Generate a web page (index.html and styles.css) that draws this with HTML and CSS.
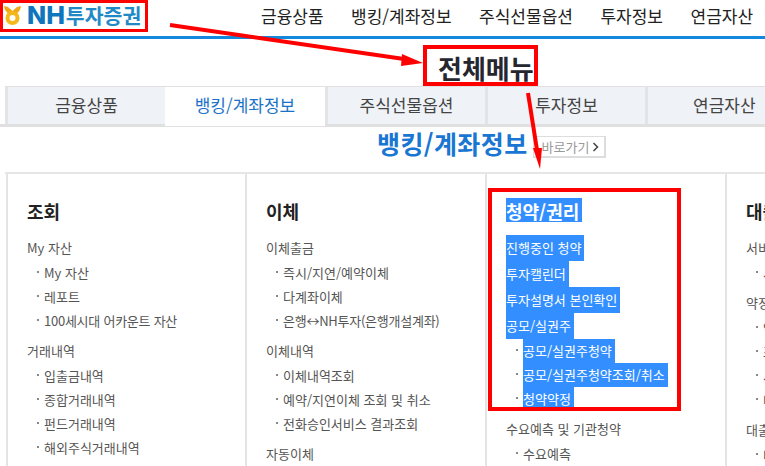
FILE: index.html
```html
<!DOCTYPE html>
<html lang="ko">
<head>
<meta charset="utf-8">
<title>NH투자증권 전체메뉴</title>
<link rel="stylesheet" href="styles.css">
</head>
<body>
<header class="topbar">
  <a class="logo">
    <svg class="logo-mark" width="17" height="19" viewBox="0 0 17 19"><path d="M0 0 L4 1 L8.5 5 L13 1 L17 0 L16 4 L12.5 8 L4.5 8 L1 4 Z" fill="#f0a818"/><circle cx="8.5" cy="12" r="5" fill="none" stroke="#f5b81c" stroke-width="4"/></svg>
    <span class="logo-nh">NH</span><span class="logo-ko">투자증권</span>
  </a>
  <nav class="topnav">
    <a>금융상품</a><a>뱅킹/계좌정보</a><a>주식선물옵션</a><a>투자정보</a><a>연금자산</a>
  </nav>
</header>
<h1 class="page-title">전체메뉴</h1>
<div class="tabs">
  <a class="tab">금융상품</a>
  <a class="tab active">뱅킹/계좌정보</a>
  <a class="tab">주식선물옵션</a>
  <a class="tab">투자정보</a>
  <a class="tab">연금자산</a>
</div>
<div class="section-head">
  <h2>뱅킹/계좌정보</h2>
  <a class="goto">바로가기<svg width="7" height="10" viewBox="0 0 7 10"><path d="M1.5 1 L5.5 5 L1.5 9" fill="none" stroke="#444" stroke-width="1.5"/></svg></a>
</div>
<div class="columns">
  <section class="col">
    <h3>조회</h3>
    <h4>My 자산</h4>
    <ul><li>My 자산</li><li>레포트</li><li class="tight">100세시대 어카운트 자산</li></ul>
    <h4>거래내역</h4>
    <ul><li>입출금내역</li><li>종합거래내역</li><li>펀드거래내역</li><li>해외주식거래내역</li></ul>
  </section>
  <section class="col">
    <h3>이체</h3>
    <h4>이체출금</h4>
    <ul><li>즉시/지연/예약이체</li><li>다계좌이체</li><li class="tight">은행↔NH투자(은행개설계좌)</li></ul>
    <h4>이체내역</h4>
    <ul><li>이체내역조회</li><li>예약/지연이체 조회 및 취소</li><li>전화승인서비스 결과조회</li></ul>
    <h4>자동이체</h4>
  </section>
  <section class="col sel">
    <h3><span>청약/권리</span></h3>
    <h4><span>진행중인 청약</span></h4>
    <h4><span>투자캘린더</span></h4>
    <h4><span>투자설명서 본인확인</span></h4>
    <h4><span>공모/실권주</span></h4>
    <ul><li><span>공모/실권주청약</span></li><li><span>공모/실권주청약조회/취소</span></li><li><span>청약약정</span></li></ul>
    <h4 class="plain">수요예측 및 기관청약</h4>
    <ul><li>수요예측</li></ul>
  </section>
  <section class="col">
    <h3>대출</h3>
    <h4>서비스</h4>
    <ul><li>서비스</li></ul>
    <h4>약정</h4>
    <ul><li>약정</li><li>조회</li><li>서비스</li><li>내역</li></ul>
    <h4>대출</h4>
    <ul><li>내역</li></ul>
  </section>
</div>
<div class="mark mark-logo"></div>
<div class="mark mark-title"></div>
<div class="mark mark-col"></div>
<svg class="arrows" width="765" height="466" viewBox="0 0 765 466">
  <path d="M170 25 L404 59" stroke="#f00" stroke-width="4" fill="none"/>
  <path d="M402 54 L423 63 L401 66 Z" fill="#f00"/>
  <path d="M528 93 L537 150" stroke="#f00" stroke-width="4" fill="none"/>
  <path d="M533 148 L542 148 L540 169 Z" fill="#f00"/>
</svg>
</body>
</html>
```
FILE: styles.css
```css
* { box-sizing: border-box; }
html, body { margin: 0; height: 466px; overflow: hidden; background: #fff; }
body { position: relative; font-family: "Noto Sans CJK KR", "Noto Sans", sans-serif; color: #555; }
h1, h2, h3, h4, ul { margin: 0; padding: 0; font-weight: normal; }
ul { list-style: none; }

.topbar { height: 39px; border-bottom: 3px solid #1488dc; display: flex; align-items: center; padding-bottom: 6px; }
.logo { display: flex; align-items: center; padding-left: 4px; width: 261px; line-height: 30px; }
.logo-mark { margin: 0 6px 0 0; }
.logo-nh { font: 800 25px/30px "Inter", sans-serif; color: #0f75bc; margin-right: 1px; }
.logo-ko { font-size: 20.5px; font-weight: 700; color: #1f8ac6; line-height: 30px; }
.topnav { display: flex; gap: 27.5px; font-size: 17px; color: #222; white-space: nowrap; }

.page-title { height: 47px; padding-left: 438px; font-size: 26px; font-weight: 700; line-height: 58px; color: #26262e; }

.tabs { display: flex; height: 41px; padding-left: 5px; border-bottom: 3px solid #e0e0e0; white-space: nowrap; }
.tab { flex: 0 0 160px; text-align: center; font-size: 17px; line-height: 36px; color: #444; background: #eff2f7; border-left: 3px solid #e2e4e8; border-top: 1px solid #e0e0e0; }
.tab.active { background: #fff; color: #1a72c8; border-left: 0; height: 40px; }
.tab:last-child { flex: 0 0 auto; width: 120px; text-align: left; padding-left: 45px; }

.section-head { display: flex; align-items: flex-start; height: 45px; padding-left: 377px; }
.section-head h2 { font-size: 25px; font-weight: 700; line-height: 32px; letter-spacing: .4px; color: #1976d2; }
.goto { display: flex; align-items: center; gap: 3px; margin: 9px 0 0 5px; width: 73px; height: 22px; padding-left: 8px; border: 1px solid #ddd; border-bottom-width: 2px; border-right-width: 2px; font-size: 13px; line-height: 20px; color: #999; }

.columns { display: flex; margin-left: 5px; border-top: 2px solid #e6e6e6; }
.col { flex: 0 0 240px; height: 300px; padding: 24px 0 0 19px; border-left: 2px solid #e4e4e4; white-space: nowrap; overflow: hidden; }
.col:first-child { flex-basis: 239px; margin-left: 1px; }
.col h3 { height: 24px; margin-bottom: 13px; font-size: 18px; font-weight: 700; line-height: 26px; color: #222; }
.col h4 { height: 26px; font-size: 13px; line-height: 26px; color: #555; }
.col ul { margin-bottom: 5px; }
.col li { position: relative; height: 24px; padding-left: 17px; font-size: 13px; line-height: 24px; color: #555; }
.col li::before { content: ""; position: absolute; left: 10px; top: 10px; width: 2px; height: 2px; background: #888; }
.col li.tight { letter-spacing: -.25px; }
.sel h3 span, .sel h4:not(.plain) span, .sel li span { display: inline-block; background: #338fff; color: #fff; padding-right: 3px; height: 100%; }

.mark { position: absolute; border: 4px solid #f00; pointer-events: none; }
.mark-logo { left: 0; top: 0; width: 148px; height: 32px; border-width: 3px; }
.mark-title { left: 423px; top: 45px; width: 115px; height: 41px; }
.mark-col { left: 488px; top: 188px; width: 193px; height: 223px; }
.arrows { position: absolute; left: 0; top: 0; pointer-events: none; }
```
